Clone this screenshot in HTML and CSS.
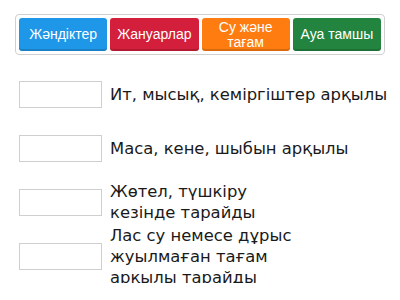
FILE: index.html
```html
<!DOCTYPE html>
<html lang="kk">
<head>
	<meta charset="UTF-8">
	<title>Сәйкестендіру</title>
	<link rel="stylesheet" href="styles.css">
</head>
<body>
<div class="bank">
	<div class="tile tile-blue">Жәндіктер</div>
	<div class="tile tile-red">Жануарлар</div>
	<div class="tile tile-orange">Су және<br>тағам</div>
	<div class="tile tile-green">Ауа тамшы</div>
</div>
<div class="rows">
	<div class="row">
		<div class="slot"></div>
		<div class="label">Ит, мысық, кеміргіштер арқылы</div>
	</div>
	<div class="row">
		<div class="slot"></div>
		<div class="label">Маса, кене, шыбын арқылы</div>
	</div>
	<div class="row">
		<div class="slot"></div>
		<div class="label">Жөтел, түшкіру<br>кезінде тарайды</div>
	</div>
	<div class="row">
		<div class="slot"></div>
		<div class="label">Лас су немесе дұрыс<br>жуылмаған тағам<br>арқылы тарайды</div>
	</div>
</div>
</body>
</html>
```

FILE: styles.css
```css
*{margin: 0; padding: 0; box-sizing: border-box}
body{
	background: #fff;
	font-family: "Liberation Sans", Arial, sans-serif;
	color: #1a1a1a;
}
.bank{
	display: flex;
	gap: 3px;
	width: 370px;
	margin: 14px 0 0 15px;
	padding: 3px;
	border: 1px solid #d0d0d0;
	border-radius: 4px;
}
.tile{
	flex: 1;
	height: 33px;
	display: flex;
	align-items: center;
	justify-content: center;
	text-align: center;
	color: #fff;
	font-size: 14px;
	line-height: 15px;
	border-radius: 3px;
	box-shadow: inset 0 -2px 0 rgba(0,0,0,.15);
}
.tile-blue{background: #1f97e8}
.tile-red{background: #d31f3b}
.tile-orange{background: #ff7c10}
.tile-green{background: #22843f}
.rows{
	padding-top: 12px;
}
.row{
	display: flex;
	align-items: center;
	height: 54px;
	padding-left: 19px;
}
.slot{
	width: 83px;
	height: 27px;
	border: 1px solid #cfcfcf;
	flex-shrink: 0;
}
.label{
	margin-left: 8px;
	font-family: "DejaVu Sans", "Liberation Sans", sans-serif;
	font-size: 16.4px;
	line-height: 21px;
	white-space: nowrap;
}
```
